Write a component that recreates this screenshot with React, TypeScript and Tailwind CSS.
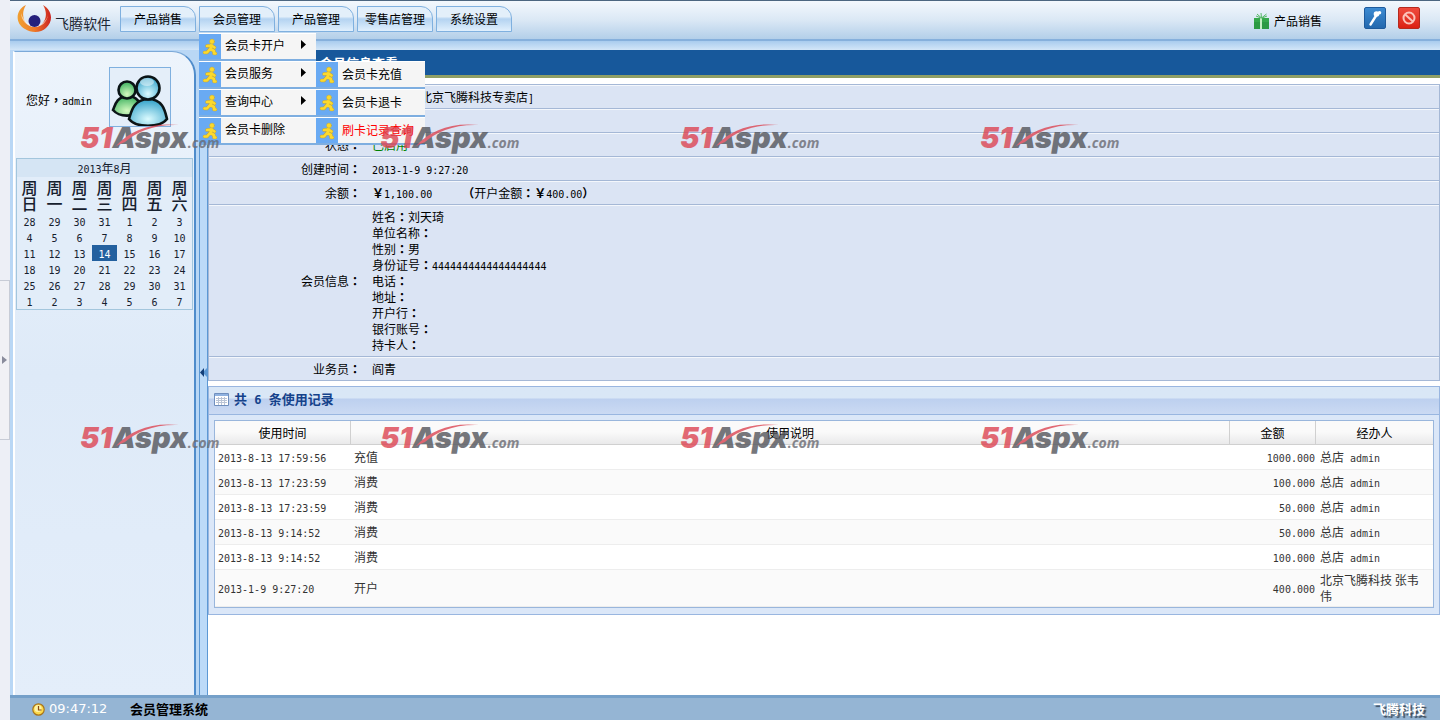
import React from 'react';

const menus = ['产品销售', '会员管理', '产品管理', '零售店管理', '系统设置'];

const subMenu = [
  { label: '会员卡开户', arrow: true },
  { label: '会员服务', arrow: true },
  { label: '查询中心', arrow: true },
  { label: '会员卡删除', arrow: false },
];

const serviceMenu = ['会员卡充值', '会员卡退卡', '刷卡记录查询'];

const weekdays = ['周日', '周一', '周二', '周三', '周四', '周五', '周六'];

const weeks = [
  [28, 29, 30, 31, 1, 2, 3],
  [4, 5, 6, 7, 8, 9, 10],
  [11, 12, 13, 14, 15, 16, 17],
  [18, 19, 20, 21, 22, 23, 24],
  [25, 26, 27, 28, 29, 30, 31],
  [1, 2, 3, 4, 5, 6, 7],
];

const records = [
  { time: '2013-8-13 17:59:56', note: '充值', amount: '1000.000', shop: '总店', user: 'admin' },
  { time: '2013-8-13 17:23:59', note: '消费', amount: '100.000', shop: '总店', user: 'admin' },
  { time: '2013-8-13 17:23:59', note: '消费', amount: '50.000', shop: '总店', user: 'admin' },
  { time: '2013-8-13 9:14:52', note: '消费', amount: '50.000', shop: '总店', user: 'admin' },
  { time: '2013-8-13 9:14:52', note: '消费', amount: '100.000', shop: '总店', user: 'admin' },
  { time: '2013-1-9 9:27:20', note: '开户', amount: '400.000', shop: '北京飞腾科技 张韦伟', user: '' },
];

const memberInfo = [
  ['姓名', '刘天琦'],
  ['单位名称', ''],
  ['性别', '男'],
  ['身份证号', '4444444444444444444'],
  ['电话', ''],
  ['地址', ''],
  ['开户行', ''],
  ['银行账号', ''],
  ['持卡人', ''],
];

// latin text and digits
function Mono({ children }: { children: React.ReactNode }) {
  return <span className="font-['DejaVu_Sans_Mono',monospace] text-[10px] leading-none">{children}</span>;
}

// full-width punctuation, centred in its cell
function Punct({ children }: { children: React.ReactNode }) {
  return <span className="font-['Noto_Sans_CJK_TC',sans-serif] leading-none font-bold [text-spacing-trim:space-all]">{children}</span>;
}

export default function App() {
  return (
    <div className="relative flex h-screen overflow-hidden bg-white font-['Noto_Sans_CJK_SC',sans-serif] text-xs leading-4 text-black">
      <div className="flex w-2.5 shrink-0 items-center bg-[#edeff6]">
        <button aria-label="展开" className="flex h-40 w-2.5 items-center justify-center border border-l-0 border-[#c8ccd6] bg-[#f1f1f5]">
          <svg width="5" height="8" viewBox="0 0 5 8"><path d="M0 0l5 4-5 4z" fill="#8a8c9c" /></svg>
        </button>
      </div>

      <div className="flex min-w-0 flex-1 flex-col">
        <Header />
        <div className="flex min-h-0 flex-1">
          <Sidebar />
          <main className="min-w-0 flex-1 bg-white">
            <h1 className="h-7 border-b-3 border-[#8f9f66] bg-[#17589b] pt-[3px] pl-28 text-[13px] leading-5 font-bold text-white">会员信息查看</h1>
            <MemberTable />
            <Records />
          </main>
        </div>
        <footer className="flex h-[25px] shrink-0 items-center border-t-3 border-[#75a0c9] bg-[#95b5d4] pr-[15px] pl-[22px] text-[13px]">
          <ClockIcon />
          <span className="ml-1 w-[81px] font-['DejaVu_Sans',sans-serif] text-white">09:47:12</span>
          <strong className="flex-1">会员管理系统</strong>
          <strong className="text-white [text-shadow:2px_2px_1px_#3b4a5a]">飞腾科技</strong>
        </footer>
      </div>

      <Watermark className="left-20 top-[123px]" />
      <Watermark className="left-[380px] top-[123px]" />
      <Watermark className="left-[680px] top-[123px]" />
      <Watermark className="left-[980px] top-[123px]" />
      <Watermark className="left-20 top-[423px]" />
      <Watermark className="left-[380px] top-[423px]" />
      <Watermark className="left-[680px] top-[423px]" />
      <Watermark className="left-[980px] top-[423px]" />
    </div>
  );
}

function Header() {
  return (
    <header className="h-[50px] shrink-0 border-t border-[#4c6680] bg-[#bdd8f3]">
      <div className="flex h-10 items-start border-b-2 border-[#86b0dc] bg-linear-to-b from-[#f3f8fd] via-[#dbe8f5] to-[#b3cfe9]">
        <div className="flex w-[110px] items-start pl-1.5">
          <Logo />
          <span className="mt-3 ml-[3px] text-sm leading-5 whitespace-nowrap text-[#1c2634]">飞腾软件</span>
        </div>
        <nav className="flex flex-1 gap-[3px] pt-[5px]">
          {menus.map((m) => (
            <div key={m} className="relative">
              <button className="h-[26px] w-19 rounded-tr-xl border border-[#7fb0df] bg-linear-to-b from-[#e3effa] from-40% via-[#b4d3f1] via-50% to-[#e1f0fd] text-xs whitespace-nowrap">
                {m}
              </button>
              {m === '会员管理' && <DropMenu />}
            </div>
          ))}
        </nav>
        <a href="#" className="mr-[42px] flex items-center gap-1 pt-3">
          <GiftIcon />
          产品销售
        </a>
        <div className="flex gap-3 pt-1.5 pr-5">
          <button aria-label="修改密码" className="flex size-[22px] items-center justify-center rounded-xs border border-[#1e5a9c] bg-linear-to-b from-[#3d8bd2] to-[#2368ae]">
            <svg width="18" height="18" viewBox="0 0 18 18">
              <path d="M4.500 15.500L10.500 6" stroke="#fff" strokeWidth="2.400" strokeLinecap="round" />
              <circle cx="10.500" cy="5" r="2.800" fill="#fff" />
              <circle cx="13.500" cy="3.800" r="1.800" fill="#fff" />
            </svg>
          </button>
          <button aria-label="退出" className="flex size-[22px] items-center justify-center rounded-xs border border-[#b52a1e] bg-linear-to-b from-[#ef4a3c] to-[#dc1f12]">
            <svg width="14" height="14" viewBox="0 0 14 14" fill="none" stroke="#fbc3ba" strokeWidth="2">
              <circle cx="7" cy="7" r="5.500" />
              <path d="M3.200 3.400l7.600 7.200" />
            </svg>
          </button>
        </div>
      </div>
      <div className="h-[9px] bg-linear-to-b from-[#a9ccee] to-[#d3e6f8]" />
    </header>
  );
}

function DropMenu() {
  return (
    <ul className="absolute top-full left-0 z-20 mt-px w-[117px]">
      {subMenu.map((item) => (
        <li key={item.label} className="relative">
          <button className="flex h-7 w-full items-center border-t border-b-2 border-t-white border-b-[#7eaee0] bg-[#f5f5f5] text-left">
            <RunIcon />
            <span className="flex-1 pb-1 pl-1">{item.label}</span>
            {item.arrow && (
              <svg className="mr-2.5 mb-1" width="5" height="9" viewBox="0 0 5 9"><path d="M0 0l5 4.500L0 9z" fill="#000" /></svg>
            )}
          </button>
          {item.label === '会员服务' && (
            <ul className="absolute top-0 left-full w-[109px]">
              {serviceMenu.map((s, i) => (
                <li key={s}>
                  <button className={`flex h-7 w-full items-center border-t border-b-2 border-t-white border-b-[#7eaee0] bg-[#f5f5f5] text-left ${i === 2 ? 'text-[#f00]' : ''}`}>
                    <RunIcon />
                    <span className="pb-0.5 pl-1">{s}</span>
                  </button>
                </li>
              ))}
            </ul>
          )}
        </li>
      ))}
    </ul>
  );
}

function Sidebar() {
  return (
    <aside className="flex w-[198px] shrink-0 bg-[#b9d7f5]">
      <div className="mt-px ml-[3px] w-[184px] rounded-tr-3xl border-t border-r-2 border-l-2 border-t-[#7ba9d8] border-r-[#4f8ccb] border-l-white bg-linear-to-b from-[#edf4fc] via-[#deeaf8] to-[#e4eefa]">
        <div className="flex h-[106px] items-start pl-[11px]">
          <p className="w-[83px] pt-10"><span>您好</span><Punct>，</Punct><Mono>admin</Mono></p>
          <div className="mt-[15px] flex h-15 w-[62px] items-center justify-center border border-[#7fb0df] bg-[#e4eef9]">
            <PeopleIcon />
          </div>
        </div>
        <table className="ml-px w-[177px] table-fixed border-separate border-spacing-0 border border-t-0 border-[#a3c6dd] bg-[#e2edf9] text-center text-[#16202e]">
          <caption className="h-[19px] border border-b-0 border-[#a3c6dd] bg-[#d5e5f4] leading-[18px]">
            <Mono>2013</Mono>年<Mono>8</Mono>月
          </caption>
          <thead>
            <tr>
              {weekdays.map((d) => (
                <th key={d} className="h-9 px-1 py-0 text-base leading-4 font-medium break-all">{d}</th>
              ))}
            </tr>
          </thead>
          <tbody>
            {weeks.map((w, i) => (
              <tr key={i}>
                {w.map((d, j) => (
                  <td key={j} className={`h-4 p-0 leading-4 ${i === 2 && j === 3 ? 'bg-[#23609f] text-white' : ''}`}><Mono>{d}</Mono></td>
                ))}
              </tr>
            ))}
          </tbody>
        </table>
      </div>
      <div className="ml-[3px] flex flex-1 items-center border-x border-[#5c98d4] bg-[#bcdaf8]">
        <button aria-label="收起">
          <svg width="7" height="9" viewBox="0 0 7 9"><path d="M4 0v9L0 4.500z" fill="#123e78" /><path d="M7 0v9L4 6V3z" fill="#5c98d4" /></svg>
        </button>
      </div>
    </aside>
  );
}

function InfoRow({ label, children }: { label?: string, children?: React.ReactNode }) {
  return (
    <tr>
      <th scope="row" className="h-6 w-[157px] border-t border-b border-t-[#f4f7fc] border-b-[#a5b8d6] py-[3px] pr-[5px] text-right font-normal">
        {label && <>{label}<Punct>：</Punct></>}
      </th>
      <td className="border-t border-b border-t-[#f4f7fc] border-b-[#a5b8d6] py-[3px] pl-1.5">{children}</td>
    </tr>
  );
}

function MemberTable() {
  return (
    <table className="mt-1.5 w-full border-separate border-spacing-0 border border-b-0 border-[#a5b8d6] bg-[#dbe4f4]">
      <tbody>
        <InfoRow><span className="ml-12">北京飞腾科技专卖店<Mono>]</Mono></span></InfoRow>
        <InfoRow />
        <InfoRow label="状态"><span className="text-[#008000]">已启用</span></InfoRow>
        <InfoRow label="创建时间"><Mono>2013-1-9 9:27:20</Mono></InfoRow>
        <InfoRow label="余额">
          <Punct>￥</Punct><Mono>1,100.00</Mono>
          <span className="ml-[30px]"><Punct>（</Punct>开户金额<Punct>：￥</Punct><Mono>400.00</Mono><Punct>）</Punct></span>
        </InfoRow>
        <InfoRow label="会员信息">
          {memberInfo.map(([k, v]) => (
            <div key={k} className="h-4">{k}<Punct>：</Punct>{k === '身份证号' ? <Mono>{v}</Mono> : v}</div>
          ))}
        </InfoRow>
        <InfoRow label="业务员">阎青</InfoRow>
      </tbody>
    </table>
  );
}

function Records() {
  return (
    <section className="mt-[5px] border border-[#99b6e0] bg-[#dbe7f8]">
      <h2 className="flex h-7 items-center border-b border-[#99b6e0] bg-linear-to-b from-[#d9e7f6] from-40% via-[#bdd0ef] via-45% to-[#cbdaf3] pb-0.5 pl-1 text-[13px] font-bold text-[#15428b]">
        <GridIcon />
        <span className="pl-[5px] whitespace-pre">共<span className="font-['DejaVu_Sans_Mono',monospace] text-xs"> 6 </span>条使用记录</span>
      </h2>
      <div className="px-[5px] pt-[5px] pb-1.5">
        <table className="w-full table-fixed border-separate border-spacing-0 border border-[#99b6dc] bg-white text-[#333]">
          <colgroup>
            <col className="w-[136px]" />
            <col />
            <col className="w-[86px]" />
            <col className="w-[117px]" />
          </colgroup>
          <thead>
            <tr className="bg-linear-to-b from-[#fafafa] from-45% to-[#e8e8e9] text-black">
              <th className="h-6 border-r border-b border-[#d0d0d0] p-0 font-normal">使用时间</th>
              <th className="border-r border-b border-[#d0d0d0] p-0 font-normal">使用说明</th>
              <th className="border-r border-b border-[#d0d0d0] p-0 font-normal">金额</th>
              <th className="border-b border-[#d0d0d0] p-0 font-normal">经办人</th>
            </tr>
          </thead>
          <tbody>
            {records.map((r, i) => (
              <tr key={i} className={i % 2 ? 'bg-[#fafafa]' : 'bg-white'}>
                <td className="h-[25px] border-b border-[#ededed] px-[3px] py-0"><Mono>{r.time}</Mono></td>
                <td className="border-b border-[#ededed] px-[3px] py-0">{r.note}</td>
                <td className="border-b border-[#ededed] py-0 pr-px text-right"><Mono>{r.amount}</Mono></td>
                <td className="border-b border-[#ededed] py-0.5 pr-2 pl-1 break-all">
                  {r.shop}{r.user && <span className="ml-1.5"><Mono>{r.user}</Mono></span>}
                </td>
              </tr>
            ))}
          </tbody>
        </table>
      </div>
    </section>
  );
}

function Watermark({ className }: { className: string }) {
  return (
    <div className={`pointer-events-none absolute z-30 flex h-[30px] items-baseline font-['Inter',sans-serif] text-[29px] leading-[30px] font-black italic opacity-80 ${className}`}>
      <span className="text-[#dd4552]">51</span>
      <span className="text-[#55565c]">Aspx</span>
      <span className="font-['Open_Sans',sans-serif] text-sm font-bold text-[#6b6c74]">.com</span>
      <svg className="absolute top-0 left-9" width="64" height="24" viewBox="0 0 64 24">
        <path d="M0 23C14 7 36-1 63 2 38 1 20 9 9 19z" fill="#dd4552" />
      </svg>
    </div>
  );
}

function Logo() {
  return (
    <svg width="36" height="32" viewBox="0 0 36 32">
      <defs>
        <linearGradient id="ring" x1="0" x2="1">
          <stop offset="0" stopColor="#f0a030" />
          <stop offset=".5" stopColor="#ee7a28" />
          <stop offset="1" stopColor="#cc2220" />
        </linearGradient>
      </defs>
      <path d="M10 4C-1 9-1 23 9 28c6 4 16 4 21-1 8-7 6-18-3-23 4 6 4 14-1 19-4 4-11 4-15 0C6 18 6 10 10 4z" fill="url(#ring)" />
      <path d="M5 12c0 7 6 14 14 14 7 0 12-5 13-12-1 5-6 10-12 10C12 24 7 19 5 12z" fill="#fff" opacity=".55" />
      <circle cx="18.500" cy="20" r="6" fill="#24207c" />
    </svg>
  );
}

function RunIcon() {
  return (
    <span className="flex h-full w-[22px] shrink-0 items-center justify-center bg-[#69aaf3]">
      <svg width="16" height="18" viewBox="0 0 16 18" fill="none" strokeLinecap="round" strokeLinejoin="round">
        <g stroke="#b9a548" strokeWidth="3.600">
          <path d="M9.500 6.500L8.500 10.500L5 14.500H2.500M8.500 11L12 13V15.500H13.500M9.500 7.500L5 8M9.500 7.500L12.500 9.500" />
        </g>
        <g stroke="#fcd92c" strokeWidth="2.600">
          <path d="M9.500 6.500L8.500 10.500L5 14.500H2.500M8.500 11L12 13V15.500H13.500M9.500 7.500L5 8M9.500 7.500L12.500 9.500" />
        </g>
        <circle cx="10" cy="3.500" r="2.500" fill="#fcd92c" stroke="#b9a548" strokeWidth=".5" />
      </svg>
    </span>
  );
}

function PeopleIcon() {
  return (
    <svg width="60" height="58" viewBox="0 0 60 58" stroke="#0b1416" strokeWidth="2.600">
      <defs>
        <radialGradient id="pg" cx=".5" cy=".75" r=".7">
          <stop offset="0" stopColor="#d5fac0" />
          <stop offset="1" stopColor="#43b463" />
        </radialGradient>
        <radialGradient id="pb" cx=".5" cy=".75" r=".7">
          <stop offset="0" stopColor="#dcfbff" />
          <stop offset="1" stopColor="#3aa5cb" />
        </radialGradient>
      </defs>
      <path d="M3 42c2-4 3-13 14-14 11 0 13 7 14 14-6 7-21 8-28 0z" fill="url(#pg)" />
      <circle cx="17" cy="22" r="8.500" fill="url(#pg)" />
      <path d="M19 51c2-5 3-19 19-20 15 0 17 12 19 20-7 9-31 9-38 0z" fill="url(#pb)" />
      <circle cx="38" cy="20" r="11.500" fill="url(#pb)" />
      <ellipse cx="37" cy="14" rx="7" ry="4" fill="#fff" opacity=".45" stroke="none" />
    </svg>
  );
}

function GiftIcon() {
  return (
    <svg width="17" height="16" viewBox="0 0 17 16">
      <path d="M1 5h15v4H1z" fill="#35a84c" />
      <path d="M1 9h15v7H1z" fill="#2c9a44" />
      <path d="M7 5h2v11H7z" fill="#c5efc4" />
      <path d="M8.500 5L4 1M8.500 5L8 0M8.500 5l5-4M3 3l5 2M14 3L9 5" stroke="#55b866" fill="none" />
    </svg>
  );
}

function GridIcon() {
  return (
    <svg className="ml-px" width="15" height="13" viewBox="0 0 15 13">
      <path d="M.5.500h14v12H.5z" fill="#fff" stroke="#6f8fbe" />
      <path d="M1 1h13v2H1z" fill="#8fb2e0" />
      <path d="M2 5.500h11M2 7.500h11M2 9.500h11M4.500 4v8M7.500 4v8M10.500 4v8" stroke="#b9c4d6" />
    </svg>
  );
}

function ClockIcon() {
  return (
    <svg width="13" height="13" viewBox="0 0 13 13">
      <circle cx="6.500" cy="6.500" r="5.700" fill="#fbd94a" stroke="#a8741c" strokeWidth="1.200" />
      <circle cx="6" cy="5.500" r="3.500" fill="#fff3a5" />
      <path d="M6.500 3v4h3" stroke="#8a4a10" fill="none" strokeWidth="1.200" />
    </svg>
  );
}
